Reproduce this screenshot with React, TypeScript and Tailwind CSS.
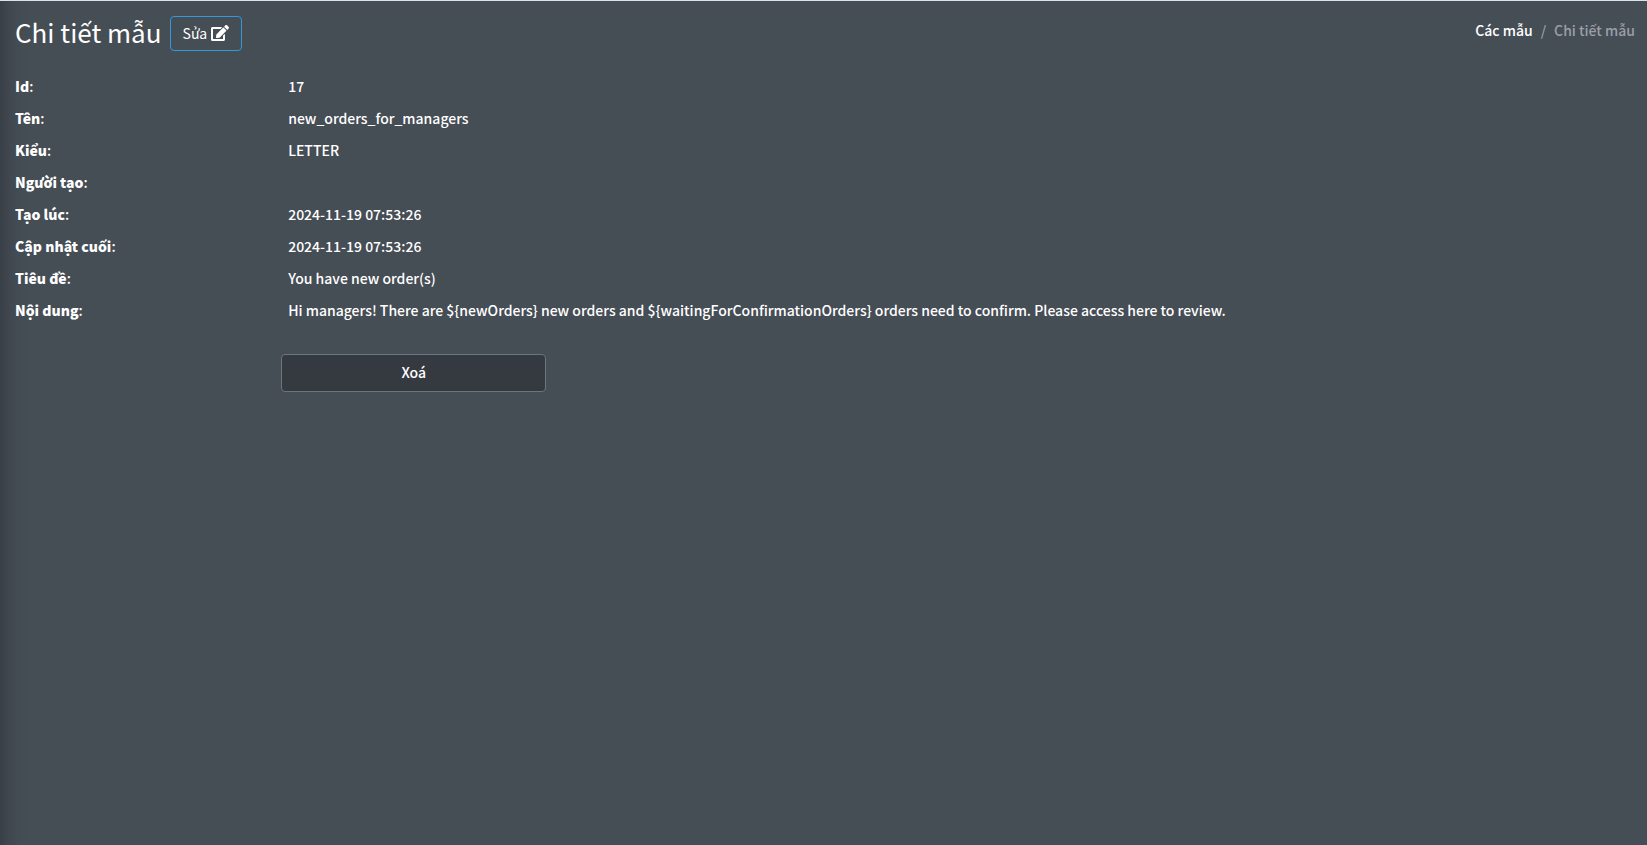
import { FaEdit } from "react-icons/fa";

const fields: Array<{ label: string; value: string }> = [
  { label: "Id", value: "17" },
  { label: "Tên", value: "new_orders_for_managers" },
  { label: "Kiểu", value: "LETTER" },
  { label: "Người tạo", value: "" },
  { label: "Tạo lúc", value: "2024-11-19 07:53:26" },
  { label: "Cập nhật cuối", value: "2024-11-19 07:53:26" },
  { label: "Tiêu đề", value: "You have new order(s)" },
  {
    label: "Nội dung",
    value:
      "Hi managers! There are ${newOrders} new orders and ${waitingForConfirmationOrders} orders need to confirm. Please access here to review.",
  },
];

export default function App() {
  return (
    <div className="min-h-screen border-t border-[#dee2e6] bg-[#454d55] bg-[linear-gradient(to_right,#383f46_0px,#3f464e_8px,#434b53_18px,#454d55_28px)] font-['Noto_Sans_CJK_SC','Noto_Sans',sans-serif] text-sm leading-6 text-white">
      <PageHeader />
      <main className="pl-2">
        <dl>
          {fields.map((field) => (
            <DetailRow key={field.label} label={field.label} value={field.value} />
          ))}
        </dl>
        <div className="mt-7 grid grid-cols-6">
          <button
            type="button"
            className="col-start-2 mr-2 h-[38px] rounded border border-[#6c757d] bg-[#343a40] pb-0.5 font-medium text-white"
          >
            Xoá
          </button>
        </div>
      </main>
    </div>
  );
}

function PageHeader() {
  return (
    <header className="flex items-start justify-between pt-[15px] pr-3 pb-[19px] pl-[15px]">
      <div className="flex items-start gap-2">
        <h1 className="text-[26px] leading-[31px]">Chi tiết mẫu</h1>
        <button
          type="button"
          className="flex h-[35px] items-center gap-1 rounded border border-[#3498db] px-3 pb-0.5"
        >
          Sửa
          <FaEdit className="h-4 w-[18px]" />
        </button>
      </div>
      <nav aria-label="breadcrumb" className="pt-0.5 font-medium">
        <ol className="flex">
          <li>
            <a href="#">Các mẫu</a>
          </li>
          <li className="text-[#9a9fa8]">
            <span className="px-2">/</span>
            Chi tiết mẫu
          </li>
        </ol>
      </nav>
    </header>
  );
}

function DetailRow({ label, value }: { label: string; value: string }) {
  return (
    <div className="grid min-h-8 grid-cols-6 py-1">
      <dt className="px-[7px] font-medium">
        <b className="font-black">{label}</b>:
      </dt>
      <dd className="col-span-5 px-[7px] font-medium">{value}</dd>
    </div>
  );
}
